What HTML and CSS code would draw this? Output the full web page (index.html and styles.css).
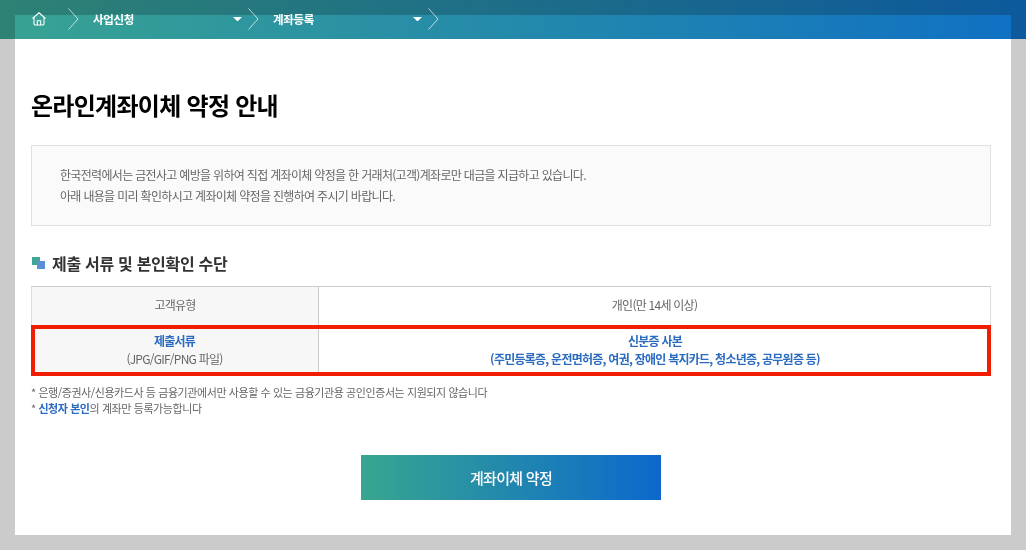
FILE: index.html
```html
<!DOCTYPE html>
<html lang="ko">
<head>
<meta charset="utf-8">
<title>온라인계좌이체 약정 안내</title>
<link rel="stylesheet" href="styles.css">
</head>
<body>
<header class="topbar">
  <svg class="home" width="16" height="16" viewBox="0 0 16 16" fill="none" stroke="#fff" stroke-width="1.1"><path d="M1.5 7.5 8 1.8l6.500 5.700M3 6.500v6.200q0 1.300 1.300 1.300h7.400q1.300 0 1.300-1.300V6.500M6.300 14V9.800h3.400V14"/></svg>
  <svg class="chev first" width="11" height="22" viewBox="0 0 11 22" fill="none" stroke="#fff" stroke-opacity=".7"><path d="M.5.5 10 11 .5 21.500"/></svg>
  <span class="crumb">사업신청</span>
  <span class="caret"></span>
  <svg class="chev" width="11" height="22" viewBox="0 0 11 22" fill="none" stroke="#fff" stroke-opacity=".7"><path d="M.5.5 10 11 .5 21.500"/></svg>
  <span class="crumb">계좌등록</span>
  <span class="caret"></span>
  <svg class="chev" width="11" height="22" viewBox="0 0 11 22" fill="none" stroke="#fff" stroke-opacity=".7"><path d="M.5.5 10 11 .5 21.500"/></svg>
</header>
<main class="card">
  <h1 class="title">온라인계좌이체 약정 안내</h1>
  <section class="intro">
    <p>한국전력에서는 금전사고 예방을 위하여 직접 계좌이체 약정을 한 거래처(고객)계좌로만 대금을 지급하고 있습니다.</p>
    <p>아래 내용을 미리 확인하시고 계좌이체 약정을 진행하여 주시기 바랍니다.</p>
  </section>
  <h2 class="subtitle">
    <svg class="bullet" width="14" height="13" viewBox="0 0 14 13"><rect x="0" y="0" width="8" height="8" fill="#3fa596"/><rect x="5" y="4" width="8" height="8" fill="#5b8fd6"/></svg>
    제출 서류 및 본인확인 수단
  </h2>
  <div class="table">
    <div class="row row-type">
      <div class="head">고객유형</div>
      <div class="cell">개인(만 14세 이상)</div>
    </div>
    <div class="row row-docs">
      <div class="head"><strong class="blue">제출서류</strong><span>(JPG/GIF/PNG 파일)</span></div>
      <div class="cell blue strong">신분증 사본<br>(주민등록증, 운전면허증, 여권, 장애인 복지카드, 청소년증, 공무원증 등)</div>
    </div>
  </div>
  <ul class="notes">
    <li>* 은행/증권사/신용카드사 등 금융기관에서만 사용할 수 있는 금융기관용 공인인증서는 지원되지 않습니다</li>
    <li>* <strong class="blue">신청자 본인</strong>의 계좌만 등록가능합니다</li>
  </ul>
  <div class="actions"><button class="submit" type="button">계좌이체 약정</button></div>
</main>
</body>
</html>
```
FILE: styles.css
```css
* { box-sizing: border-box; }
html, body { margin: 0; height: 100%; }
body {
  background: #cbcbcb;
  padding: 15px;
  font-family: "Noto Sans CJK KR", "Noto Sans", sans-serif;
  color: #666;
  overflow: hidden;
}
.topbar {
  position: absolute;
  left: 0;
  top: 0;
  width: 1026px;
  height: 39px;
  padding: 8px 0 0 31px;
  display: flex;
  align-items: flex-start;
  color: #fff;
  font-size: 11.500px;
  font-weight: 700;
  letter-spacing: -.3px;
}
.topbar::before {
  content: "";
  position: absolute;
  inset: 0;
  background: linear-gradient(90deg, #38a392, #1070c4);
  mix-blend-mode: multiply;
}
.topbar > * { position: relative; }
.home { margin-top: 3px; }
.chev.first { margin-left: 21px; }
.crumb { width: 130px; margin-left: 14px; line-height: 22px; }
.caret {
  margin: 9px 6px 0 10px;
  border: 4.500px solid transparent;
  border-top: 4.500px solid #fff;
  border-bottom: 0;
  width: 9px;
  height: 4px;
}
.card {
  height: 520px;
  background: #fff;
  padding: 72px 20px 0 16px;
}
.title {
  margin: 0;
  font-size: 24px;
  line-height: 36px;
  font-weight: 700;
  color: #000;
  letter-spacing: -.72px;
}
.intro {
  margin-top: 22px;
  height: 81px;
  padding: 18px 28px;
  background: #fafafa;
  border: 1px solid #e0e0e0;
  font-size: 12px;
  letter-spacing: -.68px;
  line-height: 21px;
}
.intro p { margin: 0; }
.subtitle {
  display: flex;
  align-items: center;
  margin: 25px 0 11px;
  height: 24px;
  font-size: 16px;
  font-weight: 700;
  color: #333;
  letter-spacing: -.3px;
}
.bullet { margin: 0 6px 0 1px; }
.table {
  border-top: 1px solid #ccc;
  font-size: 12px;
  letter-spacing: -.75px;
  text-align: center;
}
.row {
  display: grid;
  grid-template-columns: 287px 1fr;
  position: relative;
}
.row-type {
  height: 38px;
  border: 1px solid #ddd;
  border-top: 0;
  border-bottom: 0;
}
.row-type .head, .row-type .cell { padding-bottom: 3px; }
.row-docs {
  height: 51px;
  line-height: 18px;
  grid-template-columns: 288px 1fr;
}
.row-docs::after {
  content: "";
  position: absolute;
  inset: 0;
  border: 4px solid #f01d00;
}
.head {
  background: #f7f7f7;
  border-right: 1px solid #ccc;
  display: flex;
  flex-direction: column;
  align-items: center;
  justify-content: center;
}
.row-docs .head { padding-bottom: 2px; }
.cell {
  display: flex;
  align-items: center;
  justify-content: center;
}
.row-docs .cell { display: block; padding-top: 7px; }
.blue { color: #2a6bc0; }
.strong, strong { font-weight: 700; }
.notes {
  list-style: none;
  margin: 8px 0 0;
  padding: 0;
  font-size: 11px;
  line-height: 16px;
  letter-spacing: -.42px;
}
.actions {
  display: flex;
  justify-content: center;
  margin-top: 39px;
}
.submit {
  width: 300px;
  height: 45px;
  border: 0;
  background: linear-gradient(90deg, #38a690, #0c68cc);
  color: #fff;
  font: 500 15px "Noto Sans CJK KR", sans-serif;
  letter-spacing: -.7px;
}
```
